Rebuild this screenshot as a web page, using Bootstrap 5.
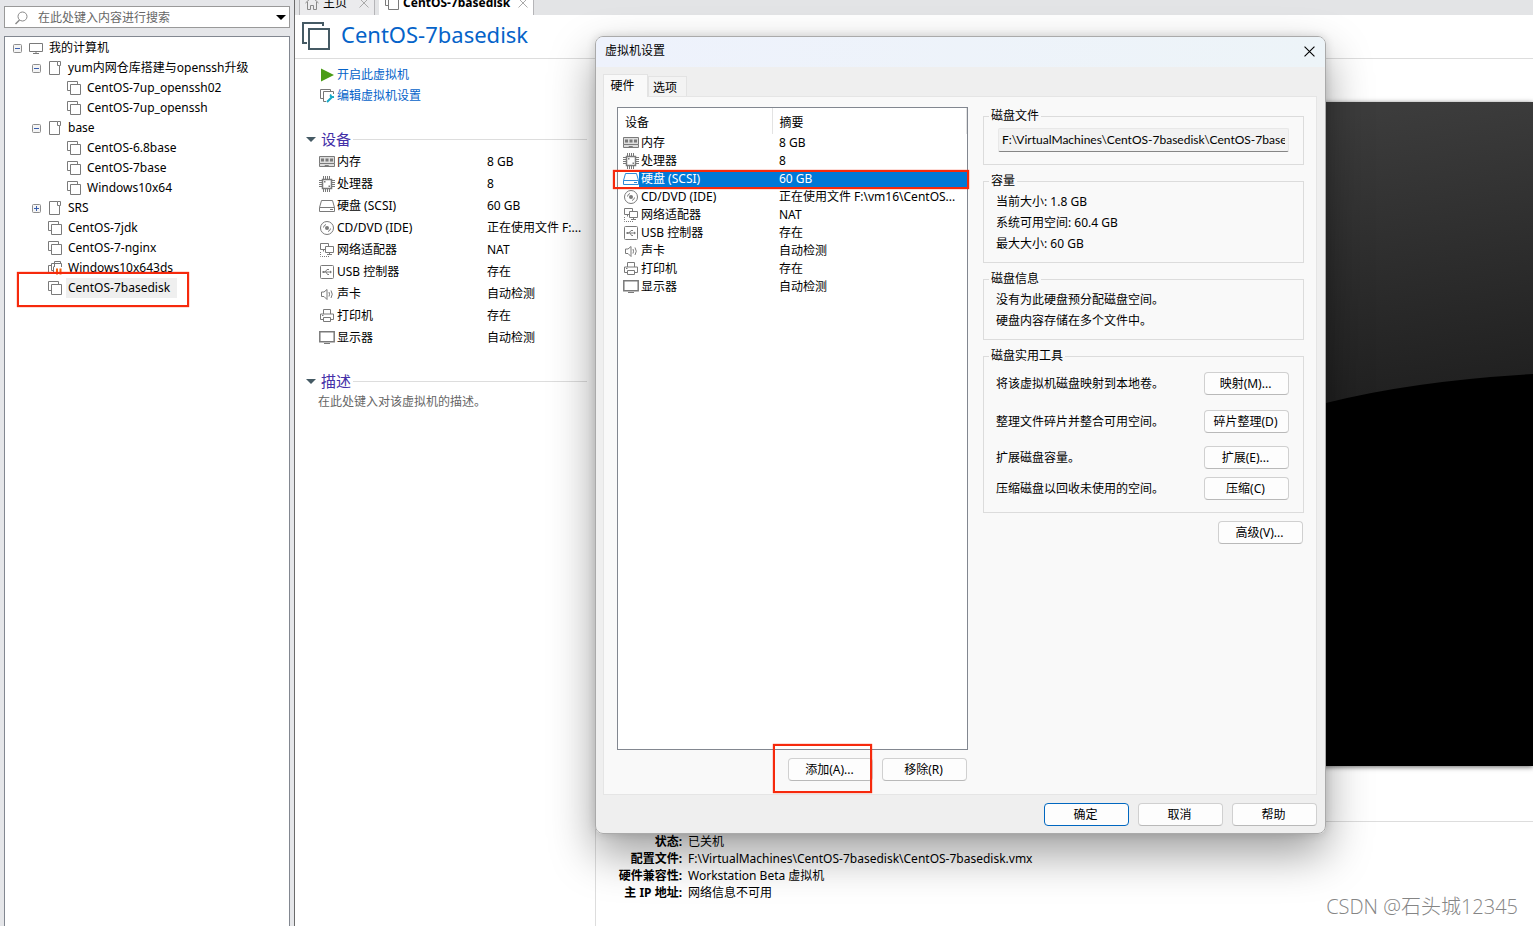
<!DOCTYPE html>
<html lang="zh-CN">
<head>
<meta charset="utf-8">
<meta name="viewport" content="width=device-width, initial-scale=1">
<title>VMware Workstation</title>
<link href="https://cdn.jsdelivr.net/npm/bootstrap@5.3.0/dist/css/bootstrap.min.css" rel="stylesheet">
<style>
  body { font: 12px/18px "Noto Sans", "Noto Sans CJK SC", sans-serif; color: #000; background: #e5e6e9; }
  svg { display: block; flex: none; }
  .ico { color: #7a7a7a; }
  ul { list-style: none; margin: 0; padding: 0; }
  a { color: #0563c9; text-decoration: none; }
  h1, h2 { font-weight: 400; margin: 0; }
  table { width: 100%; table-layout: fixed; border-collapse: collapse; }
  td, th { padding: 0; white-space: nowrap; font-weight: 400; }

  .library { width: 294px; padding: 6px 4px 0; }
  .search-box { height: 22px; border: 1px solid #999; background: #fff; padding: 1px 3px 0 9px; }
  .search-box input { border: 0; outline: 0; padding: 0; min-width: 0; color: #666; margin-left: 9px; }
  .search-box input::placeholder { color: #666; opacity: 1; }
  .plain-btn { border: 0; padding: 0; background: none; color: inherit; }
  .shut { color: #aaa; }
  .tree-box { margin-top: 8px; border: 1px solid #828790; border-bottom: 0; background: #fff; padding: 1px 0 0 8px; }
  .tree-box ul ul { padding-left: 19px; }
  .tree-row { height: 20px; }
  .tree-row .slot { width: 9px; margin-right: 7px; flex: none; }
  .tree-row .name { margin-left: 4px; padding: 0 2px; line-height: 20px; white-space: nowrap; }
  .tree-row .picked { background: #efefef; padding-right: 7px; }

  .red-mark { position: absolute; border: 2px solid #f6290c; box-shadow: 0 0 1px #f6290c; pointer-events: none; z-index: 3; }
  .mark-tree { left: -49px; right: -12px; top: -6px; bottom: -9px; }
  .mark-row { left: -5px; right: -2px; top: 0; bottom: -1px; }
  .mark-add { left: -15px; right: 1px; top: -14px; bottom: -12px; }

  .workspace { border-left: 1px solid #6b6b6b; background: #fff; }
  .tab-strip { height: 15px; overflow: hidden; background: #e3e4e6; padding-left: 4px; gap: 4px; }
  .vm-tab { height: 25px; border: 1px solid #b5b5b8; border-bottom: 0; background: #ebebed; padding: 0 5px; }
  .vm-tab.current { background: #fff; border-left-color: #fff; font-weight: 700; }
  .vm-head { height: 44px; border-bottom: 1px solid #ddd; padding: 0 0 2px 7px; }
  .vm-head h1 { font-size: 22px; line-height: 28px; color: #0563c9; margin-left: 11px; padding-bottom: 4px; }
  .vm-side { width: 301px; border-right: 1px solid #ddd; padding: 5px 8px 0 11px; }
  .cmds { padding-left: 14px; margin-bottom: 21px; }
  .cmds a { height: 21px; gap: 2px; }
  .sect { height: 24px; gap: 5px; }
  .sect h2 { font-size: 15px; line-height: 24px; color: #4430a8; }
  .sect::after { content: ""; flex: 1; height: 1px; background: #ddd; margin-left: -3px; }
  .hw-table { margin: 0 0 20px 13px; width: 270px; }
  .hw-table td { height: 22px; }
  .hw-table col:first-child { width: 168px; }
  .dev { gap: 2px; }
  .hint { color: #666; padding-left: 12px; }

  .screen-box { margin-top: 43px; box-shadow: 0 1px 5px rgba(0,0,0,.6); background: #000; min-height: 0; }
  .vm-status { margin-top: 55px; border-top: 1px solid #ddd; padding: 11px 0 25px; line-height: 17px; }
  .vm-status dl { display: grid; grid-template-columns: 86px 1fr; column-gap: 6px; margin: 0; }
  .vm-status dt { text-align: right; white-space: nowrap; }
  .vm-status dd { margin: 0; }
  .watermark { position: absolute; right: 15px; bottom: 4px; font: 300 20px/30px "Open Sans", "Noto Sans CJK SC", sans-serif; color: #858585; }

  .dlg { position: absolute; left: 595px; top: 36px; width: 731px; height: 798px; border: 1px solid #aaa; border-radius: 8px; background: #efefef; overflow: hidden; z-index: 10; }
  .dlg-shadow { position: absolute; left: 595px; top: 36px; width: 731px; height: 798px; border-radius: 8px; box-shadow: 0 20px 45px rgba(0,0,0,.38), 0 0 10px rgba(0,0,0,.14); }
  .dlg-title { height: 30px; background: linear-gradient(90deg, #eef2fc, #edf4f8); padding: 0 10px 2px 9px; }
  .dlg-tabs { padding: 7px 0 0 7px; }
  .dlg-tabs button { border: 1px solid #e3e3e3; border-bottom: 0; background: #f3f3f3; height: 20px; width: 39px; padding: 2px 5px 0 0; color: #000; }
  .dlg-tabs button.on { background: #f9f9f9; height: 23px; width: 45px; padding: 0 6px 1px 0; margin-bottom: -1px; position: relative; z-index: 1; }
  .pane { margin: 0 8px 0 7px; border: 1px solid #e5e5e5; background: #f9f9f9; padding: 10px 12px 13px 13px; gap: 15px; }
  .dev-col { width: 351px; gap: 8px; }
  .dev-btns { gap: 9px; padding-right: 1px; }
  .dev-list { border: 1px solid #828790; background: #fff; }
  .dev-list col:first-child { width: 154px; }
  .dev-list th { height: 26px; padding: 3px 0 0 7px; border-right: 1px solid #e3e3e3; }
  .dev-list td { height: 18px; padding-left: 7px; }
  .dev-list td:first-child { padding-left: 5px; }
  .dev-list .chosen td { background: #0078d7; color: #fff; }
  .dev-list .chosen td:first-child { background: linear-gradient(90deg, #fff 21px, #0078d7 21px); }
  .dev-list .chosen svg { color: #2a8ad8; }
  .push { height: 23px; width: 85px; border: 1px solid #d0d0d0; border-bottom-color: #b9b9b9; border-radius: 4px; background: #fdfdfd; padding: 1px 2px 0 0; color: #000; line-height: 20px; }
  .push.main-act { border-color: #0067c0; }
  .grp { border: 1px solid #dcdcdc; padding: 0 14px 8px 12px; margin: 0; min-width: 0; }
  .grp legend { float: none; width: auto; font-size: 12px; line-height: 18px; margin: 0 0 0 -7px; padding: 0 2px; }
  .grp p { margin: 0; line-height: 21px; }
  .grp legend + p { margin-top: 1px; }
  .path-box { display: block; height: 24px; margin: 3px 0 4px 2px; width: calc(100% - 2px); border: 1px solid #e8e8e8; border-bottom-color: #868686; border-radius: 2px; background: #f2f2f2; padding: 0 3px 2px; outline: 0; font-family: Lato, sans-serif; }
  .opts { gap: 7px; }
  .act-list { padding: 7px 0 4px; }
  .act { height: 23px; }
  .act + .act { margin-top: 15px; }
  .act + .act.near { margin-top: 13px; }
  .act + .act.close-by { margin-top: 8px; }
  .adv { margin: 1px 1px 0 0; }
  .dlg-foot { height: 38px; gap: 9px; padding: 0 8px 0 0; }
</style>
</head>
<body>
<svg width="0" height="0" class="position-absolute" aria-hidden="true">
  <defs>
    <symbol id="i-vm" viewBox="0 0 14 14"><path d="M3 9.500H.5V.5h10V3M3.500 3.500h10v10h-10z" fill="none" stroke="currentColor"/></symbol>
    <symbol id="i-folder" viewBox="0 0 14 14"><path d="M9.500.500H1.500v13h10V4.500h-2zM9.500.500h3v4h-1" fill="none" stroke="currentColor"/></symbol>
    <symbol id="i-pc" viewBox="0 0 14 14"><path d="M.5 2.500h13v8H.500zM4 12.500h6M7 10.500v2" fill="none" stroke="currentColor"/></symbol>
    <symbol id="i-minus" viewBox="0 0 9 9"><rect x=".5" y=".5" width="8" height="8" rx="1" fill="#f4f4f4" stroke="#8e8e8e"/><path d="M2 4.500h5" stroke="#3a5fae"/></symbol>
    <symbol id="i-plus" viewBox="0 0 9 9"><rect x=".5" y=".5" width="8" height="8" rx="1" fill="#f4f4f4" stroke="#8e8e8e"/><path d="M2 4.500h5M4.500 2v5" stroke="#3a5fae"/></symbol>
    <symbol id="i-x" viewBox="0 0 10 10"><path d="M.5.500l9 9M9.500.500l-9 9" stroke="currentColor" fill="none"/></symbol>
    <symbol id="i-mem" viewBox="0 0 16 16"><path d="M.5 2.500h15v7H.500zM.5 9.500v3h15v-3M6 12.500v-1h3.500v1" fill="#ddd" stroke="currentColor"/><path d="M2 4.500h3v3H2zM6.500 4.500h3v3h-3zM11 4.500h3v3h-3z" fill="currentColor"/></symbol>
    <symbol id="i-cpu" viewBox="0 0 16 16"><path d="M3.500 3.500h9v9h-9z" fill="none" stroke="currentColor" stroke-width="1.500"/><path d="M4.500 0v3M6.500 0v3M8.500 0v3M10.500 0v3M4.500 13v3M6.500 13v3M8.500 13v3M10.500 13v3M0 4.500h3M0 6.500h3M0 8.500h3M0 10.500h3M13 4.500h3M13 6.500h3M13 8.500h3M13 10.500h3" stroke="currentColor"/><path d="M5 5h1.500v1.500H5zM9.500 9.500H11V11H9.500z" fill="currentColor"/></symbol>
    <symbol id="i-disk" viewBox="0 0 16 16"><path d="M.5 9.500L2.500 2.500h11l2 7v4H.500zM.5 9.500h15" fill="#fff" stroke="currentColor"/><path d="M11 11.500h3" stroke="currentColor"/></symbol>
    <symbol id="i-cd" viewBox="0 0 16 16"><circle cx="8" cy="8" r="6.500" fill="none" stroke="currentColor"/><circle cx="8" cy="8" r="2" fill="currentColor"/><path d="M4.500 7.500a3.500 3.500 0 0 1 2.500-3M11.500 8.500A3.500 3.500 0 0 1 9 11.500" stroke="currentColor" fill="none"/></symbol>
    <symbol id="i-net" viewBox="0 0 16 16"><path d="M6 7.500H1.500v-6h8V4M6.500 4.500h8v6h-8zM10.500 10.500v2M8 12.500h5M4.500 8v1.500" fill="none" stroke="currentColor"/><path d="M1.500 10v4.500H10" fill="none" stroke="currentColor" stroke-dasharray="1 1"/></symbol>
    <symbol id="i-usb" viewBox="0 0 16 16"><rect x="1.500" y="1.500" width="13" height="13" rx="1" fill="none" stroke="currentColor"/><path d="M4 8h8M6 8l2-2.500h2M7 8l1.500 2.500H10" fill="none" stroke="currentColor"/><path d="M3.500 7h2v2h-2zM11 6.500L13 8l-2 1.500z" fill="currentColor"/></symbol>
    <symbol id="i-snd" viewBox="0 0 16 16"><path d="M2.500 6v4.500H5l3 3v-10L5 6z" fill="none" stroke="currentColor"/><path d="M10 6q1 2.300 0 4.500M12 4.500q2.500 3.700 0 7.500" fill="none" stroke="currentColor"/></symbol>
    <symbol id="i-prn" viewBox="0 0 16 16"><path d="M4.500 6V1.500h7V6M4 11.500H1.500V6h13v5.500H12M4.500 9.500h7v4h-7z" fill="none" stroke="currentColor"/><path d="M3 7.500h1.500" stroke="currentColor"/></symbol>
    <symbol id="i-mon" viewBox="0 0 16 16"><path d="M.8 1.800h14.400v9.900H.800z" fill="none" stroke="currentColor" stroke-width="1.500"/><path d="M5 13.500h6" stroke="currentColor"/></symbol>
    <symbol id="i-down" viewBox="0 0 10 5"><path d="M0 0h10L5 5z" fill="currentColor"/></symbol>
  </defs>
</svg>

<div class="d-flex vh-100 overflow-hidden position-relative">
  <aside class="library d-flex flex-column flex-shrink-0">
    <div class="search-box d-flex align-items-center">
      <svg width="15" height="14" viewBox="0 0 15 14" fill="none" stroke="#888"><circle cx="8.500" cy="5.500" r="4.500"/><path d="M5.500 9L1.500 13" stroke-width="1.500"/></svg>
      <input class="flex-grow-1" type="search" placeholder="在此处键入内容进行搜索" aria-label="搜索">
      <button class="plain-btn" aria-label="搜索选项"><svg width="10" height="5"><use href="#i-down"/></svg></button>
    </div>
    <nav class="tree-box flex-grow-1">
      <ul>
        <li>
          <div class="tree-row d-flex align-items-center"><button class="plain-btn slot" aria-label="折叠"><svg width="9" height="9"><use href="#i-minus"/></svg></button><svg class="ico" width="14" height="14"><use href="#i-pc"/></svg><span class="name">我的计算机</span></div>
          <ul>
            <li>
              <div class="tree-row d-flex align-items-center"><button class="plain-btn slot" aria-label="折叠"><svg width="9" height="9"><use href="#i-minus"/></svg></button><svg class="ico" width="14" height="14"><use href="#i-folder"/></svg><span class="name">yum内网仓库搭建与openssh升级</span></div>
              <ul>
                <li class="tree-row d-flex align-items-center"><span class="slot"></span><svg class="ico" width="14" height="14"><use href="#i-vm"/></svg><span class="name">CentOS-7up_openssh02</span></li>
                <li class="tree-row d-flex align-items-center"><span class="slot"></span><svg class="ico" width="14" height="14"><use href="#i-vm"/></svg><span class="name">CentOS-7up_openssh</span></li>
              </ul>
            </li>
            <li>
              <div class="tree-row d-flex align-items-center"><button class="plain-btn slot" aria-label="折叠"><svg width="9" height="9"><use href="#i-minus"/></svg></button><svg class="ico" width="14" height="14"><use href="#i-folder"/></svg><span class="name">base</span></div>
              <ul>
                <li class="tree-row d-flex align-items-center"><span class="slot"></span><svg class="ico" width="14" height="14"><use href="#i-vm"/></svg><span class="name">CentOS-6.8base</span></li>
                <li class="tree-row d-flex align-items-center"><span class="slot"></span><svg class="ico" width="14" height="14"><use href="#i-vm"/></svg><span class="name">CentOS-7base</span></li>
                <li class="tree-row d-flex align-items-center"><span class="slot"></span><svg class="ico" width="14" height="14"><use href="#i-vm"/></svg><span class="name">Windows10x64</span></li>
              </ul>
            </li>
            <li class="tree-row d-flex align-items-center"><button class="plain-btn slot" aria-label="展开"><svg width="9" height="9"><use href="#i-plus"/></svg></button><svg class="ico" width="14" height="14"><use href="#i-folder"/></svg><span class="name">SRS</span></li>
            <li class="tree-row d-flex align-items-center"><span class="slot"></span><svg class="ico" width="14" height="14"><use href="#i-vm"/></svg><span class="name">CentOS-7jdk</span></li>
            <li class="tree-row d-flex align-items-center"><span class="slot"></span><svg class="ico" width="14" height="14"><use href="#i-vm"/></svg><span class="name">CentOS-7-nginx</span></li>
            <li class="tree-row d-flex align-items-center"><span class="slot"></span><svg width="14" height="14" viewBox="0 0 14 14" fill="none" stroke="#777"><path d="M2.500 11.500h-2v-7h3M6 9.500H3.500v-7H6M6.500 6V.500h6V3M6.500 2.500h7V6M5.500 5.500v6"/><path d="M9 7.500v6M12.500 7.500v6" stroke="#f0600c" stroke-width="2"/></svg><span class="name">Windows10x643ds</span></li>
            <li class="tree-row d-flex align-items-center"><span class="slot"></span><svg class="ico" width="14" height="14"><use href="#i-vm"/></svg><span class="name picked position-relative">CentOS-7basedisk<span class="red-mark mark-tree"></span></span></li>
          </ul>
        </li>
      </ul>
    </nav>
  </aside>

  <main class="workspace d-flex flex-column flex-grow-1 overflow-hidden">
    <div class="tab-strip d-flex align-items-end flex-shrink-0">
      <div class="vm-tab d-flex align-items-center">
        <svg width="14" height="14" viewBox="0 0 14 14" fill="none" stroke="#888"><path d="M.5 7L7 1l6.500 6M2.500 6v7.500h3v-4h3v4h3V6"/></svg>
        <span class="ms-1 me-2">主页</span>
        <button class="plain-btn shut ms-1" aria-label="关闭"><svg width="10" height="10"><use href="#i-x"/></svg></button>
      </div>
      <div class="vm-tab current d-flex align-items-center">
        <svg class="ico me-1" width="14" height="14"><use href="#i-vm"/></svg>
        <span class="me-2">CentOS-7basedisk</span>
        <button class="plain-btn shut" aria-label="关闭"><svg width="10" height="10"><use href="#i-x"/></svg></button>
      </div>
    </div>
    <header class="vm-head d-flex align-items-center flex-shrink-0">
      <svg width="28" height="28" viewBox="0 0 28 28" fill="none" stroke="#455a64" stroke-width="2"><path d="M5 21H1V1h20v3M7 7h20v20H7z"/></svg>
      <h1>CentOS-7basedisk</h1>
    </header>
    <div class="d-flex flex-grow-1 overflow-hidden">
      <section class="vm-side flex-shrink-0">
        <div class="cmds">
          <a href="#" class="d-flex align-items-center"><svg width="15" height="14" viewBox="0 0 15 14"><path d="M1 .5v13L14 7z" fill="#4a9c15"/></svg>开启此虚拟机</a>
          <a href="#" class="d-flex align-items-center"><svg width="15" height="15" viewBox="0 0 15 15" fill="none" stroke="#777"><path d="M3 10.500H.500V1.500h10V3M6 13.500H3.500v-10h10V6"/><path d="M7 14l5-5M11 6.500q-1.500 3 3 2.500" stroke="#19a9c6" stroke-width="2"/></svg>编辑虚拟机设置</a>
        </div>
        <div class="sect d-flex align-items-center"><svg width="10" height="5" color="#455a64"><use href="#i-down"/></svg><h2>设备</h2></div>
        <table class="hw-table">
          <colgroup><col><col></colgroup>
          <tbody>
            <tr><td><div class="dev d-flex align-items-center"><svg class="ico" width="16" height="16"><use href="#i-mem"/></svg>内存</div></td><td>8 GB</td></tr>
            <tr><td><div class="dev d-flex align-items-center"><svg class="ico" width="16" height="16"><use href="#i-cpu"/></svg>处理器</div></td><td>8</td></tr>
            <tr><td><div class="dev d-flex align-items-center"><svg class="ico" width="16" height="16"><use href="#i-disk"/></svg>硬盘 (SCSI)</div></td><td>60 GB</td></tr>
            <tr><td><div class="dev d-flex align-items-center"><svg class="ico" width="16" height="16"><use href="#i-cd"/></svg>CD/DVD (IDE)</div></td><td>正在使用文件 F:...</td></tr>
            <tr><td><div class="dev d-flex align-items-center"><svg class="ico" width="16" height="16"><use href="#i-net"/></svg>网络适配器</div></td><td>NAT</td></tr>
            <tr><td><div class="dev d-flex align-items-center"><svg class="ico" width="16" height="16"><use href="#i-usb"/></svg>USB 控制器</div></td><td>存在</td></tr>
            <tr><td><div class="dev d-flex align-items-center"><svg class="ico" width="16" height="16"><use href="#i-snd"/></svg>声卡</div></td><td>自动检测</td></tr>
            <tr><td><div class="dev d-flex align-items-center"><svg class="ico" width="16" height="16"><use href="#i-prn"/></svg>打印机</div></td><td>存在</td></tr>
            <tr><td><div class="dev d-flex align-items-center"><svg class="ico" width="16" height="16"><use href="#i-mon"/></svg>显示器</div></td><td>自动检测</td></tr>
          </tbody>
        </table>
        <div class="sect d-flex align-items-center"><svg width="10" height="5" color="#455a64"><use href="#i-down"/></svg><h2>描述</h2></div>
        <div class="hint">在此处键入对该虚拟机的描述。</div>
      </section>
      <section class="d-flex flex-column flex-grow-1 overflow-hidden">
        <div class="screen-box flex-grow-1">
          <svg width="100%" height="100%" viewBox="0 0 937 664" preserveAspectRatio="none">
            <defs><linearGradient id="glow" x1="0.900" y1="0" x2="1" y2="0.500"><stop offset="0" stop-color="#3c3c3c"/><stop offset="1" stop-color="#1b1b1b"/></linearGradient></defs>
            <path d="M0 0h937v664H0z" fill="url(#glow)"/>
            <path d="M0 600L730 301Q816 279 937 272V664H0z" fill="#000"/>
          </svg>
        </div>
        <div class="vm-status">
          <dl>
            <dt>状态:</dt><dd>已关机</dd>
            <dt>配置文件:</dt><dd>F:\VirtualMachines\CentOS-7basedisk\CentOS-7basedisk.vmx</dd>
            <dt>硬件兼容性:</dt><dd>Workstation Beta 虚拟机</dd>
            <dt>主 IP 地址:</dt><dd>网络信息不可用</dd>
          </dl>
        </div>
      </section>
    </div>
  </main>

  <div class="dlg-shadow"></div>
  <div class="dlg d-flex flex-column" role="dialog" aria-labelledby="dlg-name">
    <div class="dlg-title d-flex align-items-center justify-content-between">
      <span id="dlg-name">虚拟机设置</span>
      <button class="plain-btn" aria-label="关闭"><svg width="11" height="11"><use href="#i-x"/></svg></button>
    </div>
    <div class="dlg-tabs d-flex align-items-end">
      <button class="on">硬件</button><button>选项</button>
    </div>
    <div class="pane d-flex flex-grow-1">
      <div class="dev-col d-flex flex-column flex-shrink-0">
        <div class="dev-list flex-grow-1">
          <table>
            <colgroup><col><col></colgroup>
            <thead><tr><th>设备</th><th>摘要</th></tr></thead>
            <tbody>
              <tr><td><div class="dev d-flex align-items-center"><svg class="ico" width="16" height="16"><use href="#i-mem"/></svg>内存</div></td><td>8 GB</td></tr>
              <tr><td><div class="dev d-flex align-items-center"><svg class="ico" width="16" height="16"><use href="#i-cpu"/></svg>处理器</div></td><td>8</td></tr>
              <tr class="chosen position-relative"><td><div class="dev d-flex align-items-center"><svg width="16" height="16"><use href="#i-disk"/></svg>硬盘 (SCSI)</div><span class="red-mark mark-row"></span></td><td>60 GB</td></tr>
              <tr><td><div class="dev d-flex align-items-center"><svg class="ico" width="16" height="16"><use href="#i-cd"/></svg>CD/DVD (IDE)</div></td><td>正在使用文件 F:\vm16\CentOS...</td></tr>
              <tr><td><div class="dev d-flex align-items-center"><svg class="ico" width="16" height="16"><use href="#i-net"/></svg>网络适配器</div></td><td>NAT</td></tr>
              <tr><td><div class="dev d-flex align-items-center"><svg class="ico" width="16" height="16"><use href="#i-usb"/></svg>USB 控制器</div></td><td>存在</td></tr>
              <tr><td><div class="dev d-flex align-items-center"><svg class="ico" width="16" height="16"><use href="#i-snd"/></svg>声卡</div></td><td>自动检测</td></tr>
              <tr><td><div class="dev d-flex align-items-center"><svg class="ico" width="16" height="16"><use href="#i-prn"/></svg>打印机</div></td><td>存在</td></tr>
              <tr><td><div class="dev d-flex align-items-center"><svg class="ico" width="16" height="16"><use href="#i-mon"/></svg>显示器</div></td><td>自动检测</td></tr>
            </tbody>
          </table>
        </div>
        <div class="dev-btns d-flex justify-content-end">
          <div class="position-relative"><button class="push d-block">添加(A)...</button><span class="red-mark mark-add"></span></div>
          <button class="push">移除(R)</button>
        </div>
      </div>
      <div class="opts d-flex flex-column flex-grow-1">
        <fieldset class="grp">
          <legend>磁盘文件</legend>
          <input class="path-box" readonly aria-label="磁盘文件" value="F:\VirtualMachines\CentOS-7basedisk\CentOS-7base">
        </fieldset>
        <fieldset class="grp">
          <legend>容量</legend>
          <p>当前大小: 1.8 GB</p>
          <p>系统可用空间: 60.4 GB</p>
          <p>最大大小: 60 GB</p>
        </fieldset>
        <fieldset class="grp">
          <legend>磁盘信息</legend>
          <p>没有为此硬盘预分配磁盘空间。</p>
          <p>硬盘内容存储在多个文件中。</p>
        </fieldset>
        <fieldset class="grp">
          <legend>磁盘实用工具</legend>
          <div class="act-list">
            <div class="act d-flex align-items-center justify-content-between">将该虚拟机磁盘映射到本地卷。<button class="push">映射(M)...</button></div>
            <div class="act d-flex align-items-center justify-content-between">整理文件碎片并整合可用空间。<button class="push">碎片整理(D)</button></div>
            <div class="act near d-flex align-items-center justify-content-between">扩展磁盘容量。<button class="push">扩展(E)...</button></div>
            <div class="act close-by d-flex align-items-center justify-content-between">压缩磁盘以回收未使用的空间。<button class="push">压缩(C)</button></div>
          </div>
        </fieldset>
        <button class="push adv align-self-end">高级(V)...</button>
      </div>
    </div>
    <div class="dlg-foot d-flex align-items-center justify-content-end">
      <button class="push main-act">确定</button>
      <button class="push">取消</button>
      <button class="push">帮助</button>
    </div>
  </div>

  <div class="watermark">CSDN @石头城12345</div>
</div>
<script src="https://cdn.jsdelivr.net/npm/bootstrap@5.3.0/dist/js/bootstrap.bundle.min.js"></script>
</body>
</html>
